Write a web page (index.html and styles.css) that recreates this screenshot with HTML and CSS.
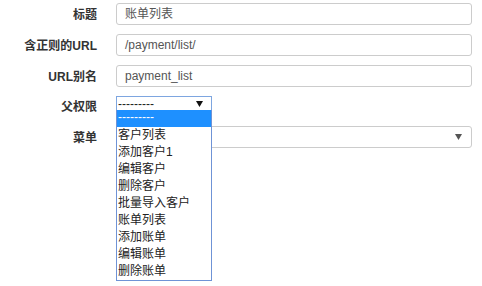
FILE: index.html
```html
<!DOCTYPE html>
<html lang="zh">
<head>
<meta charset="utf-8">
<link rel="stylesheet" href="styles.css">
</head>
<body>
<form class="form">
  <div class="row">
    <label class="label">标题</label>
    <div class="field"><div class="input">账单列表</div></div>
  </div>
  <div class="row">
    <label class="label">含正则的URL</label>
    <div class="field"><div class="input">/payment/list/</div></div>
  </div>
  <div class="row">
    <label class="label">URL别名</label>
    <div class="field"><div class="input">payment_list</div></div>
  </div>
  <div class="row row-small">
    <label class="label">父权限</label>
    <div class="field field-small">
      <div class="mini-select">
        <span class="mini-text">---------</span>
        <svg class="mini-arrow" width="7" height="6" viewBox="0 0 7 6"><polygon points="0,0 7,0 3.5,6" fill="#111"/></svg>
      </div>
      <ul class="popup">
        <li class="opt opt-active">---------</li>
        <li class="opt">客户列表</li>
        <li class="opt">添加客户1</li>
        <li class="opt">编辑客户</li>
        <li class="opt">删除客户</li>
        <li class="opt">批量导入客户</li>
        <li class="opt">账单列表</li>
        <li class="opt">添加账单</li>
        <li class="opt">编辑账单</li>
        <li class="opt">删除账单</li>
      </ul>
    </div>
  </div>
  <div class="row">
    <label class="label">菜单</label>
    <div class="field">
      <div class="input select">
        <span></span>
        <svg class="sel-arrow" width="7" height="6" viewBox="0 0 7 6"><polygon points="0,0 7,0 3.5,6" fill="#555"/></svg>
      </div>
    </div>
  </div>
</form>
</body>
</html>
```

FILE: styles.css
```css
* { box-sizing: border-box; }
html, body { margin: 0; padding: 0; background: #fff; }
body {
  font-family: "Liberation Sans", "Noto Sans CJK SC", sans-serif;
  font-size: 12px;
  color: #333;
  min-height: 286px;
}
.form {
  margin: 0;
  padding-top: 3px;
  width: 482px;
  min-height: 286px;
}
.row {
  display: flex;
  height: 22px;
  margin-bottom: 9px;
}
.row-small {
  height: 21px;
}
.label {
  width: 116px;
  padding-right: 19px;
  text-align: right;
  font-weight: bold;
  line-height: 22px;
  padding-top: 1px;
  color: #333;
}
.row-small .label {
  line-height: 20px;
}
.field {
  width: 356px;
  position: relative;
}
.input {
  height: 22px;
  border: 1px solid #ccc;
  border-radius: 3px;
  padding: 0 8px;
  line-height: 20px;
  color: #555;
  font-size: 12px;
}
.select {
  display: flex;
  align-items: center;
  justify-content: space-between;
}
.sel-arrow {
  margin-right: 1px;
}
.field-small {
  width: 96px;
}
.mini-select {
  height: 15px;
  width: 96px;
  border: 1px solid #7ea6e0;
  border-bottom: 1px solid #222;
  display: flex;
  align-items: center;
  justify-content: space-between;
  padding: 0 8px 0 1px;
  background: #fff;
}
.mini-text {
  color: #222;
  line-height: 12px;
  font-size: 12px;
}
.popup {
  position: absolute;
  left: 0;
  top: 14px;
  width: 96px;
  margin: 0;
  padding: 0;
  list-style: none;
  border: 1px solid #6f93d6;
  border-top: none;
  background: #fff;
  z-index: 10;
}
.opt {
  height: 17px;
  line-height: 17px;
  padding-left: 1px;
  color: #222;
  font-size: 12px;
  white-space: nowrap;
}
.opt-active {
  background: #1e90ff;
  color: #fff;
  line-height: 15px;
}
```
